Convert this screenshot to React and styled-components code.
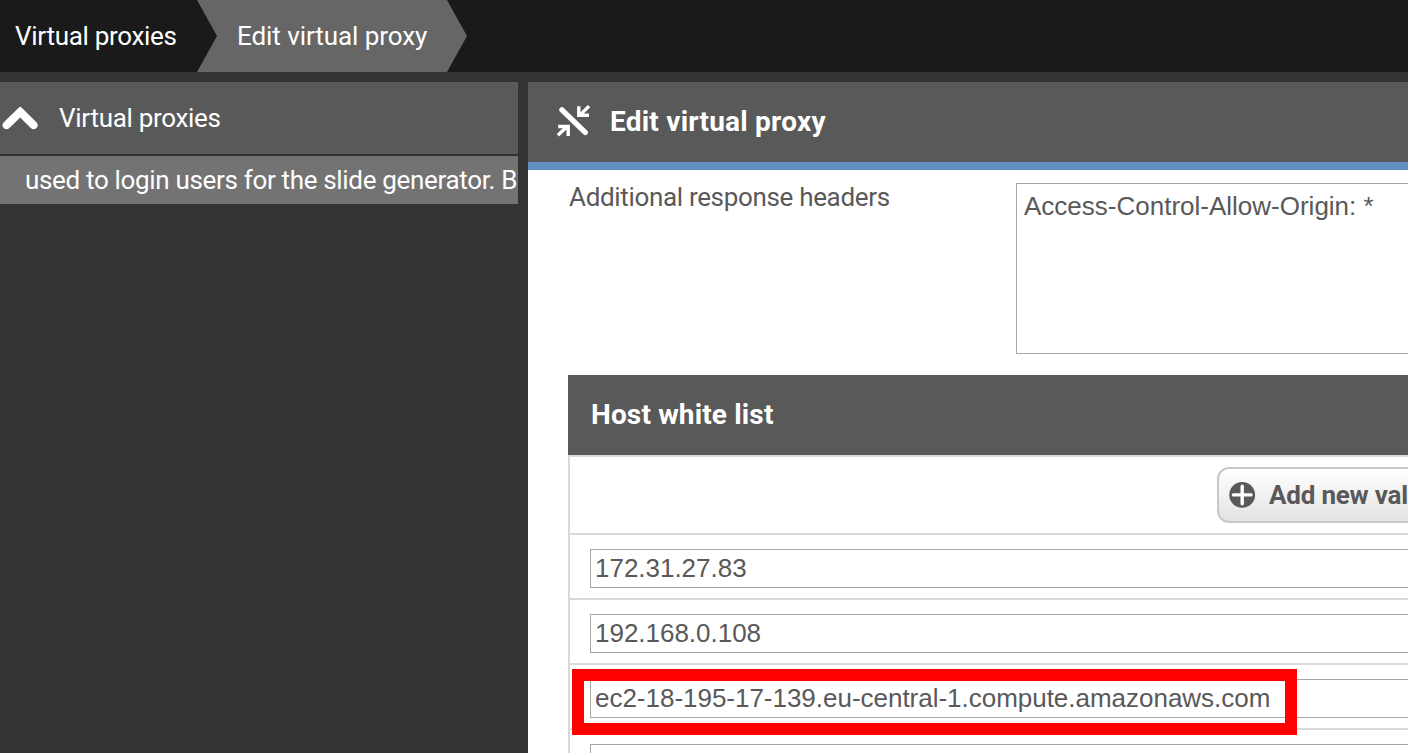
import React from "react";
import styled, { createGlobalStyle } from "styled-components";

const GlobalStyle = createGlobalStyle`
  * { box-sizing: border-box; }
  html, body { margin: 0; height: 100%; overflow: hidden; background: #333; }
  #root { height: 100%; }
`;

const Page = styled.div`
  display: flex;
  flex-direction: column;
  gap: 10px;
  width: 100%;
  height: 100vh;
  overflow: hidden;
  background: #333;
  color: #fff;
  font: 26px/36px Roboto, sans-serif;
`;

const Breadcrumbs = styled.nav`
  flex: none;
  display: flex;
  height: 72px;
  background: #1a1a1a;
`;

const Crumb = styled.div`
  flex: none;
  width: ${(p) => p.$width}px;
  height: 72px;
  padding: 18px 0 0 ${(p) => (p.$active ? 40 : 15)}px;
  letter-spacing: ${(p) => p.$tracking}px;
  white-space: nowrap;
  background: ${(p) => (p.$active ? "#666" : "transparent")};
  clip-path: ${(p) =>
    p.$active
      ? "polygon(0 0, calc(100% - 20px) 0, 100% 50%, calc(100% - 20px) 100%, 0 100%, 20px 50%)"
      : "none"};
`;

const Columns = styled.div`
  flex: 1;
  display: flex;
  gap: 10px;
  min-height: 0;
`;

const Sidebar = styled.aside`
  flex: none;
  display: flex;
  flex-direction: column;
  gap: 2px;
  width: 518px;
`;

const SidebarHeader = styled.div`
  display: flex;
  align-items: center;
  gap: 19px;
  height: 72px;
  padding-left: 1px;
  background: #595959;
  letter-spacing: -0.3px;
`;

const SidebarItem = styled.div`
  height: 48px;
  padding: 6px 0 0 25px;
  overflow: hidden;
  white-space: nowrap;
  background: #737373;
  letter-spacing: -0.33px;
`;

const Panel = styled.main`
  flex: 1;
  display: flex;
  flex-direction: column;
  min-width: 0;
  background: #fff;
  color: #595959;
`;

const PanelHeader = styled.header`
  flex: none;
  display: flex;
  align-items: center;
  gap: 18px;
  height: 88px;
  padding-left: 28px;
  border-bottom: 8px solid #5f8fbf;
  background: #595959;
  color: #fff;
`;

const Title = styled.h1`
  margin: 0;
  font-size: 28px;
  font-weight: 700;
  letter-spacing: 0.23px;
`;

const Form = styled.div`
  flex: 1;
  display: flex;
  flex-direction: column;
  gap: 21px;
  min-height: 0;
  overflow: hidden;
  padding: 13px 0 0 40px;
`;

const Field = styled.div`
  flex: none;
  display: flex;
`;

const Label = styled.label`
  flex: none;
  width: 448px;
  padding-left: 1px;
  line-height: 28px;
  letter-spacing: -0.33px;
`;

const TextArea = styled.div`
  flex: 1;
  height: 171px;
  padding: 7px 7px;
  border: 1px solid #a6a6a6;
  border-right: 0;
  font: 26px/30px "Liberation Sans", Arial, sans-serif;
  white-space: nowrap;
`;

const Table = styled.section`
  flex: none;
`;

const TableHeader = styled.h2`
  height: 80px;
  margin: 0;
  padding: 22px 0 0 23px;
  background: #595959;
  color: #fff;
  font-size: 28px;
  font-weight: 700;
  letter-spacing: 0.15px;
`;

const TableBody = styled.div`
  border-left: 2px solid #d9d9d9;
`;

const ActionRow = styled.div`
  height: 78px;
  padding: 10px 0 0 647px;
  border-top: 2px solid #d9d9d9;
`;

const AddButton = styled.div`
  display: flex;
  align-items: center;
  gap: 13px;
  width: 240px;
  height: 56px;
  padding-left: 10px;
  border: 2px solid #c8c8c8;
  border-radius: 12px;
  background: linear-gradient(#fff, #e3e3e3);
  font-weight: 700;
  letter-spacing: -0.2px;
  white-space: nowrap;
`;

const ValueRow = styled.div`
  position: relative;
  height: 65px;
  padding: 14px 0 0 20px;
  border-top: 2px solid #d9d9d9;
`;

const ValueInput = styled.div`
  height: 39px;
  padding: 0 4px;
  border: 1px solid #a6a6a6;
  border-right: 0;
  font: 26px/37px "Liberation Sans", Arial, sans-serif;
  letter-spacing: -0.02px;
  white-space: nowrap;
`;

const Highlight = styled.div`
  position: absolute;
  top: 4px;
  left: 2px;
  width: 725px;
  height: 66px;
  border: 12px solid #f00;
  z-index: 1;
`;

const hosts = [
  { value: "172.31.27.83" },
  { value: "192.168.0.108" },
  { value: "ec2-18-195-17-139.eu-central-1.compute.amazonaws.com", highlighted: true },
  { value: "" },
];

const ChevronUp = () => (
  <svg width="39" height="26" viewBox="0 0 39 26" fill="#fff">
    <path d="M16.9 3.6 19.2 1.4 21.5 3.6 35.4 17.2A4 4 0 0 1 29.8 23L19.2 12.6 8.4 23A4 4 0 0 1 2.8 17.2Z" />
  </svg>
);

const Collapse = () => (
  <svg width="36" height="36" viewBox="556 104 36 36" fill="none" stroke="#fff">
    <path d="M561.9 109.9 585.2 132.4" strokeWidth="5.4" strokeLinecap="round" />
    <path d="M589.1 106.1 579.6 115.4M578.8 106.3V115.2H589" strokeWidth="3.4" />
    <path d="M557.9 135.3 567.5 126.3M558.2 126.5H568.2V136" strokeWidth="3.4" />
  </svg>
);

const Plus = () => (
  <svg width="27" height="27" viewBox="0 0.6 27 27">
    <circle cx="13.2" cy="13.5" r="12.9" fill="#595959" />
    <path d="M13.2 4.7V22.3M4.4 13.5H22" stroke="#fff" strokeWidth="3.4" strokeLinecap="round" />
  </svg>
);

export default function App() {
  return (
    <Page>
      <GlobalStyle />
      <Breadcrumbs>
        <Crumb $width={197} $tracking={-0.3}>Virtual proxies</Crumb>
        <Crumb $width={270} $tracking={-0.07} $active>Edit virtual proxy</Crumb>
      </Breadcrumbs>
      <Columns>
        <Sidebar>
          <SidebarHeader>
            <ChevronUp />
            Virtual proxies
          </SidebarHeader>
          <SidebarItem>used to login users for the slide generator. B</SidebarItem>
        </Sidebar>
        <Panel>
          <PanelHeader>
            <Collapse />
            <Title>Edit virtual proxy</Title>
          </PanelHeader>
          <Form>
            <Field>
              <Label>Additional response headers</Label>
              <TextArea>Access-Control-Allow-Origin: *</TextArea>
            </Field>
            <Table>
              <TableHeader>Host white list</TableHeader>
              <TableBody>
                <ActionRow>
                  <AddButton>
                    <Plus />
                    Add new val
                  </AddButton>
                </ActionRow>
                {hosts.map((host, i) => (
                  <ValueRow key={i}>
                    <ValueInput>{host.value}</ValueInput>
                    {host.highlighted && <Highlight />}
                  </ValueRow>
                ))}
              </TableBody>
            </Table>
          </Form>
        </Panel>
      </Columns>
    </Page>
  );
}
